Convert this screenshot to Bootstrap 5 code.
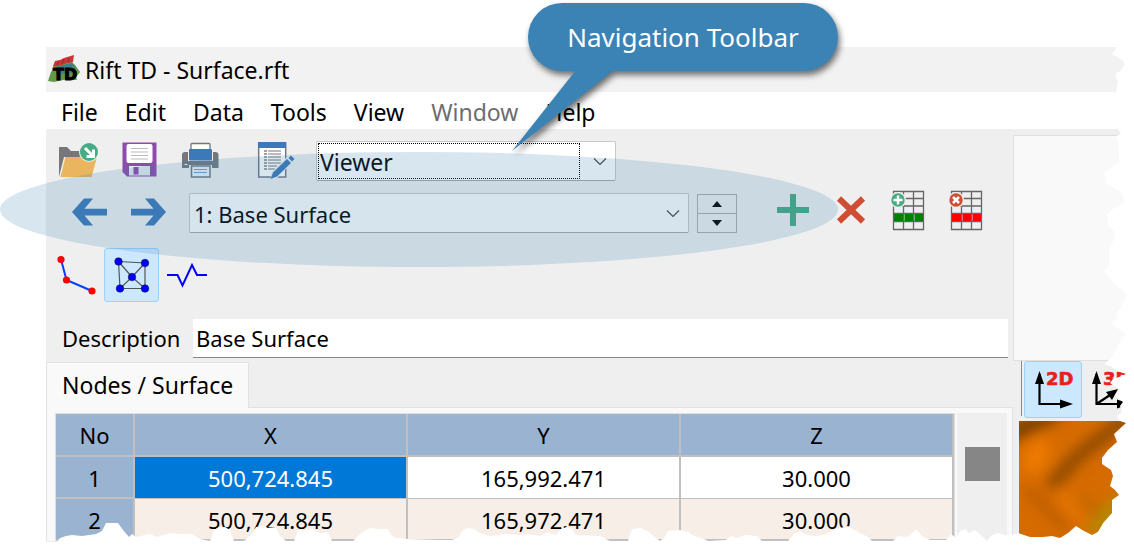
<!DOCTYPE html>
<html lang="en">
<head>
<meta charset="utf-8">
<meta name="viewport" content="width=device-width, initial-scale=1">
<title>Rift TD - Surface.rft</title>
<link href="https://cdn.jsdelivr.net/npm/bootstrap@5.3.0/dist/css/bootstrap.min.css" rel="stylesheet">
<script src="https://cdn.jsdelivr.net/npm/bootstrap@5.3.0/dist/js/bootstrap.bundle.min.js" defer></script>
<style>
  body { font-family: "Noto Sans", "Open Sans", sans-serif; font-size: 23px; line-height: 30px; color: #000; background: #fff; overflow: hidden; }
  svg { display: block; }
  .stage { padding: 47px 0 0 46px; }
  .title-strip { height: 45px; padding-left: 2px; background: #f2f2f2; }
  .menu-strip { height: 37px; gap: 27px; padding: 2px 0 0 15px; }
  .menu-strip a { color: #000; text-decoration: none; }
  .menu-strip a.off { color: #6d6d6d; }
  .work { background: #efefef; }
  .side { width: 121px; flex: none; }
  .tool { width: 40px; height: 40px; padding: 0; border: 0; background: none; flex: none; }
  .tool svg { overflow: visible; }
  .mode { width: 55px; height: 54px; padding: 0; border: 1px solid transparent; border-radius: 3px; background: none; display: flex; align-items: center; justify-content: center; flex: none; }
  .mode.on { background: #cce8ff; border-color: #99d1ff; }
  .row-a { padding: 12px 0 0 12px; gap: 21px; }
  .report { margin-left: 14px; }
  .row-b { padding: 12px 0 0 23px; gap: 20px; }
  .edit-tools { gap: 18px; margin-left: 16px; }
  .row-c { padding: 15px 0 0 3px; }
  .combo { position: relative; height: 40px; }
  .combo select { width: 100%; height: 40px; padding: 2px 36px 0 3px; border: 1px solid #c8c8c8; border-bottom-color: #a8a8a8; border-radius: 2px; appearance: none; background: #fff; color: #000; font: inherit; outline: 0; }
  .combo svg { position: absolute; right: 9px; top: 14px; pointer-events: none; }
  .combo.focused::after { content: ""; position: absolute; inset: 2px 36px 2px 2px; border: 1px dotted #000; pointer-events: none; }
  .view-pick { width: 300px; }
  .layer-pick { width: 500px; font-size: 22px; }
  .layer-pick select { background: #fdfdfd; padding-left: 4px; }
  .spin { width: 40px; margin-left: -12px; }
  .spin button { width: 40px; height: 20px; padding: 0; border: 1px solid #adadad; background: #efefef; display: flex; align-items: center; justify-content: center; }
  .spin button + button { margin-top: -1px; }
  .desc-line { padding: 17px 5px 0 16px; gap: 10px; font-size: 22px; }
  .desc-line label { width: 121px; padding-bottom: 2px; }
  .desc-line input { height: 39px; padding: 0 3px; border: 0; border-bottom: 1px solid #868686; background: #fff; font: inherit; color: #000; flex: 1; min-width: 0; outline: 0; }
  .tab-head { height: 46px; width: 203px; margin-top: 4px; margin-bottom: -1px; padding: 0 15px 2px; border: 1px solid #e2e2e2; border-bottom: 0; background: #f9f9f9; text-align: left; position: relative; font: inherit; display: block; white-space: nowrap; }
  .tab-panel { border: 1px solid #e2e2e2; border-bottom: 0; background: #f9f9f9; padding: 5px 5px 0 8px; }
  .grid-wrap { flex: 1; min-width: 0; border: 1px solid #dedede; border-bottom: 0; background: #fff; }
  .nodes { width: 100%; table-layout: fixed; border-collapse: separate; border-spacing: 0; text-align: center; font-size: 22px; }
  .nodes col.narrow { width: 79px; }
  .nodes th, .nodes td { height: 42px; padding: 1px 0 0; font-weight: 400; border-right: 2px solid #c0c0c0; border-bottom: 2px solid #c0c0c0; }
  .nodes th { background: #99b3d1; }
  .nodes td { background: #f6eee7; }
  .nodes tr.first td { background: #fff; border-bottom-width: 1px; }
  .nodes tr.first td.picked { background: #0078d7; color: #fff; }
  .nodes thead th { height: 43px; }
  .scroll-track { width: 50px; background: #efefef; margin-left: 2px; padding: 34px 0 0 8px; }
  .scroll-thumb { width: 35px; height: 34px; background: #868686; }
  .side-box { height: 226px; margin-top: 6px; border: 1px solid #dfdfdf; border-right: 0; background: #f9f9f9; }
  .side-tools { margin-left: 8px; border-left: 1px solid #8a8a8a; height: 55px; padding-left: 2px; gap: 2px; }
  .axis { width: 58px; height: 57px; border: 1px solid transparent; border-radius: 3px; padding: 0; background: none; flex: none; }
  .axis.on { background: #cce8ff; border-color: #99d1ff; }
  .relief { margin: 5px 0 0 6px; }
  .torn-right { position: absolute; right: 0; top: 0; pointer-events: none; }
  .torn-bottom { position: absolute; left: 0; bottom: 0; width: 100%; pointer-events: none; }
  .spotlight { position: absolute; left: 0; top: 152px; width: 838px; height: 115px; border-radius: 50%; background: rgba(59,130,181,.2); pointer-events: none; }
  .callout { position: absolute; left: 528px; top: 3px; width: 310px; filter: drop-shadow(2px 4px 3px rgba(0,0,0,.55)); pointer-events: none; }
  .callout-label { height: 68px; border-radius: 34px; background: #3b82b5; color: #fff; font-size: 26px; display: flex; align-items: center; justify-content: center; }
  .callout svg { position: absolute; left: -16px; top: 67px; }
</style>
</head>
<body>
<div class="stage position-relative">
  <header class="title-strip d-flex align-items-center">
    <svg width="33" height="30" viewBox="0 0 33 30" aria-hidden="true">
      <path d="M0 26 L3 17 L8 10 L22 5 L27 10 L32 17 L28 22 L29 25 L20 24 L6 27 Z" fill="#5f9a48"/>
      <path d="M8 12 L24 8 L28 13 L24 18 L8 19Z" fill="#3d7f8c"/>
      <path d="M24 11 L32 17 L27 22Z" fill="#7f9a58"/>
      <path d="M5 11 L7 6 L12 5 L16 3 L26 0 L25 7 L19 8 L14 10 L5 12Z" fill="#cf3438"/>
      <path d="M9 10 L11 6 M14 9 L16 4 M20 7 L21 3" stroke="#8e2a2c" fill="none"/>
      <text x="5" y="25" font-family="DejaVu Sans" font-size="16" font-weight="700" stroke="#000" stroke-width="1">TD</text>
    </svg>
    <span class="ps-1">Rift TD - Surface.rft</span>
  </header>
  <nav class="menu-strip d-flex align-items-center">
    <a href="#">File</a><a href="#">Edit</a><a href="#">Data</a><a href="#">Tools</a><a href="#">View</a><a href="#" class="off">Window</a><a href="#">Help</a>
  </nav>

  <div class="work d-flex">
    <main class="flex-grow-1">
      <div class="row-a d-flex">
        <button class="tool" aria-label="Open"><svg width="40" height="40" viewBox="0 0 40 40">
          <path d="M1 36V6h8l4 4h10v6H6z" fill="#777"/><path d="M7.500 16H39L33.500 36H2.500z" fill="#e9b55f"/>
          <circle cx="31" cy="11" r="10" fill="#efefef"/><circle cx="31" cy="11" r="9" fill="#47ab83"/>
          <path d="M27 7l7 7M35.500 8.500V15.500H28.500" fill="none" stroke="#fff" stroke-width="3"/></svg></button>
        <button class="tool" aria-label="Save"><svg width="40" height="40" viewBox="0 0 40 40">
          <path d="M3.500 1.500h34v34H8l-4.500-4.500z" fill="#8e4bab"/><rect x="7.500" y="3" width="26" height="19" rx="2" fill="#fff"/>
          <path d="M12 7.500h17M12 11h17M12 14.500h17M12 18h17" stroke="#bbb"/><rect x="10" y="25" width="21" height="9.500" fill="#e4ebf0"/><rect x="14.500" y="26" width="5" height="7.500" fill="#8e4bab"/></svg></button>
        <button class="tool" aria-label="Print"><svg width="40" height="40" viewBox="0 0 40 40">
          <path d="M2 14a3 3 0 013-3H8v9h25v-9h2.500a3 3 0 013 3v13H32v-3H9v3H2z" fill="#717980"/>
          <rect x="11" y="2.500" width="19" height="10" rx="1" fill="#fff" stroke="#717980" stroke-width="1.300"/><rect x="9" y="8" width="23" height="11.500" rx="1" fill="#3c79b8"/>
          <path d="M11.500 25h18.500v11H11.500z" fill="#e8f0f8" stroke="#717980" stroke-width="1.500"/><path d="M14 28.500h13M14 31.500h13" stroke="#6fa1d2"/><path d="M4.500 23.500h3" stroke="#fff"/></svg></button>
        <button class="tool report" aria-label="Report"><svg width="40" height="40" viewBox="0 0 40 40">
          <rect x="3.700" y="2" width="27" height="34" fill="#fff" stroke="#737a80" stroke-width="1.500"/><rect x="3" y="1" width="28" height="6" fill="#3c79b8"/>
          <path d="M9 10h3M9 13h3M9 16h3M9 19h3M9 22h3M9 25h3M9 28h3" stroke="#444"/><path d="M13 10h13M13 13h13M13 16h13M13 19h13M13 22h13M13 25h9M13 28h7" stroke="#777"/>
          <path d="M15 39l2-8L33 15l6 5L22 37z" fill="#eef0f1"/><path d="M15.500 38l2.500-6.500L32 18l4 4L22 35.500z" fill="#3c79b8"/><path d="M33.500 17l2.500-2.500 3.500 3.500-2.500 2.500z" fill="#3c79b8"/></svg></button>
        <div class="combo view-pick focused">
          <select aria-label="Output"><option>Viewer</option></select>
          <svg width="14" height="14" viewBox="0 0 14 14"><path d="M1 3.500l6 6 6-6" fill="none" stroke="#444" stroke-width="1.200"/></svg>
        </div>
      </div>

      <div class="row-b d-flex align-items-center">
        <button class="tool" aria-label="Previous"><svg width="40" height="40" viewBox="0 0 40 40"><path d="M3 19L15 5.500h9L15.500 15.800H38v6.600H15.500L24 32.500h-9z" fill="#3c79b8"/></svg></button>
        <button class="tool" aria-label="Next"><svg width="40" height="40" viewBox="0 0 40 40"><path d="M37 19L25 5.500h-9l8.500 10.300H2v6.600h22.500L16 32.500h9z" fill="#3c79b8"/></svg></button>
        <div class="combo layer-pick">
          <select aria-label="Surface"><option>1: Base Surface</option></select>
          <svg width="14" height="14" viewBox="0 0 14 14"><path d="M1 3.500l6 6 6-6" fill="none" stroke="#444" stroke-width="1.200"/></svg>
        </div>
        <div class="spin">
          <button aria-label="Up"><svg width="10" height="6"><path d="M0 6L5 0l5 6z"/></svg></button>
          <button aria-label="Down"><svg width="10" height="6"><path d="M0 0h10L5 6z"/></svg></button>
        </div>
        <div class="edit-tools d-flex">
          <button class="tool" aria-label="Add"><svg width="40" height="40" viewBox="0 0 40 40"><path d="M17 1h6v13h13v6H23v13h-6V20H4v-6h13z" fill="#47ab83"/></svg></button>
          <button class="tool" aria-label="Delete"><svg width="40" height="40" viewBox="0 0 40 40"><path d="M8 5.500L32 28.500M32 5.500L8 28.500" stroke="#cf4d33" stroke-width="6"/></svg></button>
          <button class="tool" aria-label="Insert row"><svg width="40" height="40" viewBox="0 2 40 40">
            <path d="M4.500.500h30v38h-30zM14.500 0v38M24.500 0v38M4 7.500h31M4 15h31M4 22.500h31M4 30.500h31" fill="none" stroke="#666" stroke-width="1.300"/>
            <path d="M5 23h9v7H5zM15.500 23h8.500v7h-8.500zM25.500 23H34v7h-8.500z" fill="#008000"/><circle cx="9" cy="9" r="8" fill="#efefef"/><circle cx="9" cy="9" r="6.700" fill="#47ab83"/><path d="M9 4.500v9M4.500 9h9" stroke="#fff" stroke-width="2.500"/></svg></button>
          <button class="tool" aria-label="Delete row"><svg width="40" height="40" viewBox="0 2 40 40">
            <path d="M4.500.500h30v38h-30zM14.500 0v38M24.500 0v38M4 7.500h31M4 15h31M4 22.500h31M4 30.500h31" fill="none" stroke="#666" stroke-width="1.300"/>
            <path d="M5 23h9v7H5zM15.500 23h8.500v7h-8.500zM25.500 23H34v7h-8.500z" fill="#f00"/><circle cx="9" cy="9" r="8" fill="#efefef"/><circle cx="9" cy="9" r="6.700" fill="#cf4d33"/><path d="M6 6l6 6M12 6l-6 6" stroke="#fff" stroke-width="2.500"/></svg></button>
        </div>
      </div>

      <div class="row-c d-flex">
        <button class="mode" aria-label="Polyline"><svg width="40" height="40" viewBox="0 0 40 40"><path d="M4 4.500L9.500 25 35 36" fill="none" stroke="#0040ff" stroke-width="2"/><g fill="#f00"><circle cx="4" cy="4.500" r="3.600"/><circle cx="9.500" cy="25" r="3.600"/><circle cx="35" cy="36" r="3.600"/></g></svg></button>
        <button class="mode on" aria-label="Surface nodes"><svg width="40" height="40" viewBox="0 0 40 40"><path d="M6.500 6.500L33 8v25.500H8zL20 22 33 8M8 33.500L20 22l13 11.500" fill="none" stroke="#555" stroke-width="1.200"/><g fill="#00f" stroke="#113" stroke-width=".5"><circle cx="6.500" cy="6.500" r="3.800"/><circle cx="33" cy="8" r="3.800"/><circle cx="20" cy="22" r="3.800"/><circle cx="8" cy="33.500" r="3.800"/><circle cx="33" cy="33.500" r="3.800"/></g></svg></button>
        <button class="mode" aria-label="Section"><svg width="40" height="40" viewBox="0 0 40 40"><path d="M0 20h10.500L15.500 30.500 25 10l5 10h10" fill="none" stroke="#00f" stroke-width="2"/></svg></button>
      </div>

      <div class="desc-line d-flex align-items-center">
        <label for="desc">Description</label>
        <input id="desc" type="text" value="Base Surface">
      </div>

      <button class="tab-head">Nodes / Surface</button>
      <section class="tab-panel d-flex">
        <div class="grid-wrap">
          <table class="nodes">
            <colgroup><col class="narrow"><col><col><col></colgroup>
            <thead><tr><th>No</th><th>X</th><th>Y</th><th>Z</th></tr></thead>
            <tbody>
              <tr class="first"><th>1</th><td class="picked">500,724.845</td><td>165,992.471</td><td>30.000</td></tr>
              <tr><th>2</th><td>500,724.845</td><td>165,972.471</td><td>30.000</td></tr>
            </tbody>
          </table>
        </div>
        <div class="scroll-track"><div class="scroll-thumb"></div></div>
      </section>
    </main>

    <aside class="side overflow-hidden">
      <div class="side-box"></div>
      <div class="side-tools d-flex">
        <button class="axis on" aria-label="2D view"><svg width="56" height="55" viewBox="0 0 56 55"><path d="M14.500 12v30H40" fill="none" stroke="#000" stroke-width="2.200"/><path d="M14.500 9l4.500 13h-9zM48 42l-13-4.500v9z"/><text x="21" y="23" font-family="DejaVu Sans" font-weight="700" font-size="18" fill="#e8201c" stroke="#e8201c" stroke-width=".6">2D</text></svg></button>
        <button class="axis" aria-label="3D view"><svg width="56" height="55" viewBox="0 0 56 55"><path d="M11.500 12v30H38M11.500 42l15-10" fill="none" stroke="#000" stroke-width="2.200"/><path d="M11.500 9l4.500 13H7zM45 42l-13-4.500v9zM33 27l-12 3 6 8z"/><text x="18" y="23" font-family="DejaVu Sans" font-weight="700" font-size="18" fill="#e8201c" stroke="#e8201c" stroke-width=".6">3D</text></svg></button>
      </div>
      <svg class="relief" width="115" height="133" viewBox="0 0 115 133" aria-hidden="true">
        <defs><filter id="soft" x="-40%" y="-40%" width="180%" height="180%"><feGaussianBlur stdDeviation="7"/></filter></defs>
        <rect width="115" height="133" fill="#d66b00"/>
        <g filter="url(#soft)" fill="none" stroke-linecap="round">
          <path d="M-6 12L34 -8" stroke="#7c4000" stroke-width="18"/>
          <path d="M34 62L60 34 110 -4" stroke="#884600" stroke-width="13"/>
          <path d="M14 42L20 28" stroke="#ee7a00" stroke-width="22"/>
          <path d="M10 70L46 106" stroke="#b85a00" stroke-width="9"/>
          <path d="M44 76L60 96" stroke="#e67600" stroke-width="12"/>
          <path d="M62 78L84 96" stroke="#b46400" stroke-width="7"/>
          <path d="M76 108L98 84" stroke="#b48a00" stroke-width="16"/>
        </g>
      </svg>
    </aside>
  </div>

  <svg class="torn-right" width="40" height="554" viewBox="1094 0 40 554" aria-hidden="true">
    <path fill="#fff" d="M1134 0H1117V47L1112 54 1122 60 1125 64 1121 70 1115 75 1118 82 1116 92V129H1118L1121 134 1116 136 1119 146V162L1110 168 1104 173 1107 180 1104 182 1114 188 1123 194 1124 202 1113 209 1107 215 1108 226 1115 232 1113 242 1109 248V265L1104 272 1110 278 1114 284 1127 294 1122 306 1117 312V318L1110 323 1126 334 1120 341 1116 350 1110 359 1104 364 1112 367 1117 371 1126 374 1119 377 1113 379 1110 383 1120 390 1115 395 1123 402 1120 406 1122 412 1117 416 1120 421 1126 423 1114 434 1117 442 1108 450 1102 458V464L1111 470 1113 476 1110 486 1115 490 1119 495 1112 500 1112 513 1104 522 1098 532 1094 535V554H1134Z"/>
  </svg>
  <svg class="torn-bottom" height="32" viewBox="0 522 1134 32" preserveAspectRatio="none" aria-hidden="true">
    <path fill="#fff" d="M0 554V542H46L57 542 60 538 66 536 72 535 82 536 96 534 102 531 106 523H118L123 530 129 537 132 534 136 537 150 534 157 537 170 533 180 534 192 534 200 539 210 541 214 530 219 527H225L230 530 234 541H244L252 534 256 527 264 526 268 528 276 527 280 536 286 541H294L298 530 304 531 312 529 320 533 328 532 332 541H353L362 532 370 528 380 529 388 529 392 536 396 538 408 539 440 540 452 540 458 538 462 531 468 528 474 529 480 533 490 536 505 534 520 535 528 534 540 536 548 532 556 535 560 530 566 527 572 529 576 535 600 536 610 541H628L632 529 640 528 646 530 652 535 660 541 664 538 668 531 680 530 688 532 694 536 704 539 708 541 726 540 731 536 737 538 745 535 757 536 762 541H788L794 534 800 531 804 534 814 536 824 535 832 531 840 528 848 526 853 529 860 533 868 537 872 541H893L898 536 908 537 914 531 917 530 922 536 930 540H946L951 534 956 538 960 531 966 529 968 533 975 530 983 537 987 541 992 535 998 533 1008 536 1018 533 1030 537 1043 537 1052 536 1060 538 1068 533 1076 526 1084 531 1092 535 1098 532 1104 522H1134V554Z"/>
  </svg>

  <div class="spotlight"></div>
  <div class="callout">
    <div class="callout-label">Navigation Toolbar</div>
    <svg width="110" height="82" viewBox="0 0 110 82" aria-hidden="true"><path d="M64 0H102L0 81Z" fill="#3b82b5"/></svg>
  </div>
</div>
</body>
</html>
